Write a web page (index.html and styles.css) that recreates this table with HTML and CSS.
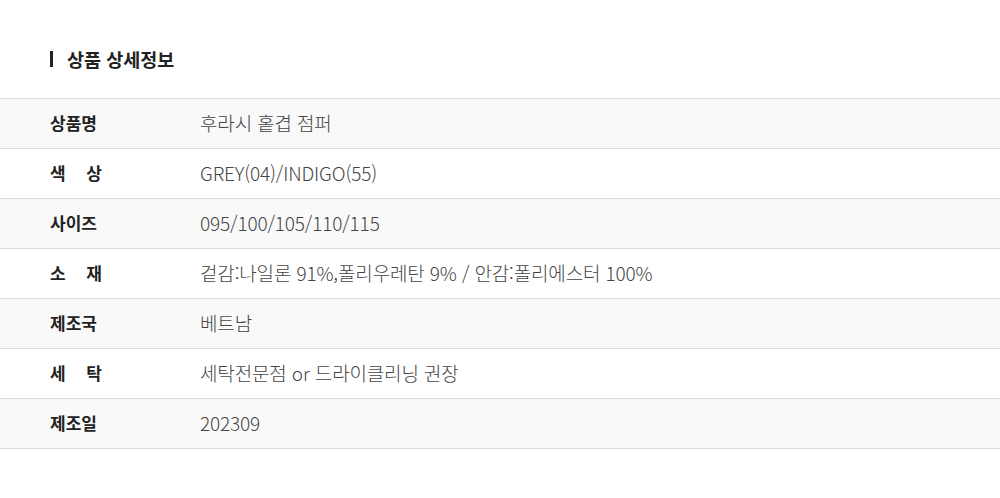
FILE: index.html
```html
<!DOCTYPE html>
<html lang="ko">
<head>
  <meta charset="UTF-8" />
  <title>상품 상세정보</title>
  <link rel="stylesheet" href="styles.css">
</head>
<body>
  <h3 class="title">상품 상세정보</h3>
  <table class="info">
    <tr>
      <th><span class="label">상품명</span></th>
      <td>후라시 홑겹 점퍼</td>
    </tr>
    <tr>
      <th><span class="label">색 상</span></th>
      <td>GREY(04)/INDIGO(55)</td>
    </tr>
    <tr>
      <th><span class="label">사이즈</span></th>
      <td>095/100/105/110/115</td>
    </tr>
    <tr>
      <th><span class="label">소 재</span></th>
      <td>겉감:나일론 91%,폴리우레탄 9% / 안감:폴리에스터 100%</td>
    </tr>
    <tr>
      <th><span class="label">제조국</span></th>
      <td>베트남</td>
    </tr>
    <tr>
      <th><span class="label">세 탁</span></th>
      <td>세탁전문점 or 드라이클리닝 권장</td>
    </tr>
    <tr>
      <th><span class="label">제조일</span></th>
      <td>202309</td>
    </tr>
  </table>
</body>
</html>
```

FILE: styles.css
```css
body {
  margin: 0;
  background-color: #fff;
  font-family: "Noto Sans CJK KR", "Noto Sans", sans-serif;
  color: #222;
}
.title {
  margin: 0;
  padding: 49px 0 29px 50px;
  font-size: 18.5px;
  line-height: 20px;
  font-weight: 700;
  color: #222;
  display: flex;
  align-items: center;
}
.title::before {
  content: "";
  display: inline-block;
  width: 3px;
  height: 16px;
  background-color: #222;
  margin-right: 14px;
}
.info {
  width: 100%;
  border-collapse: collapse;
  border-top: 1px solid #ddd;
}
.info tr:nth-child(odd) {
  background-color: #f9f9f9;
}
.info th,
.info td {
  height: 50px;
  padding: 0 0 2px;
  box-sizing: border-box;
  border-bottom: 1px solid #ddd;
  font-size: 17px;
  line-height: 24px;
  text-align: left;
  vertical-align: middle;
}
.info th {
  width: 200px;
  padding-left: 50px;
  font-weight: 700;
  color: #222;
}
.label {
  display: block;
  width: 52px;
  text-align: justify;
  text-align-last: justify;
}
.info td {
  color: #444;
  font-size: 19px;
  font-weight: 300;
  letter-spacing: -0.15px;
}
```
